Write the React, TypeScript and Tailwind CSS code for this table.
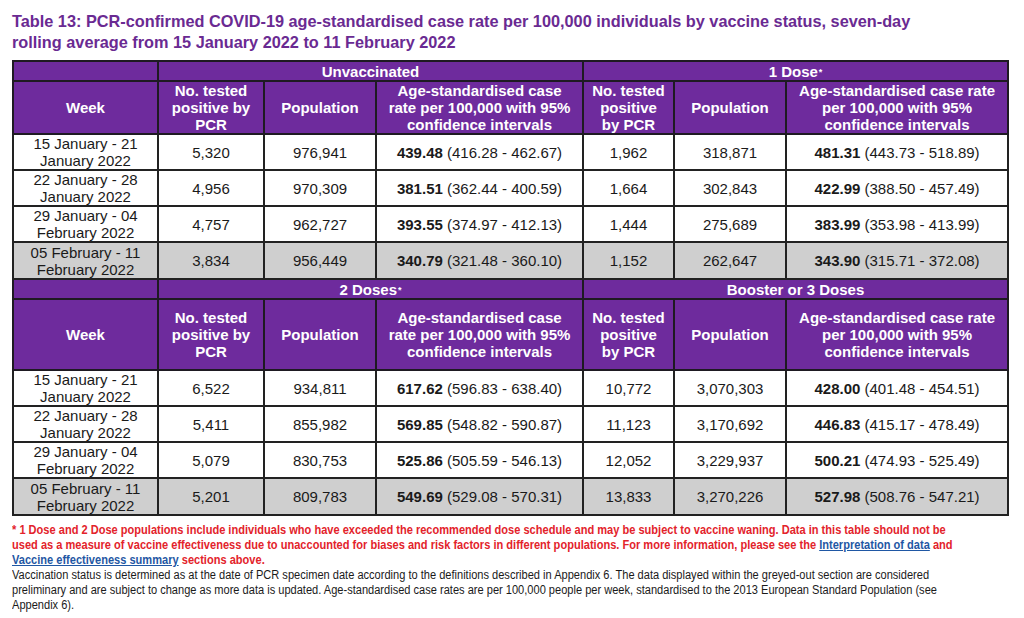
import React from 'react';

type Row = { week: [string, string]; a: string[]; b: string[]; grey?: boolean };

type Block = {
  left: string;
  leftStar: boolean;
  right: string;
  rightStar: boolean;
  subH: string;
  rows: Row[];
};

const blocks: Block[] = [
  {
    left: 'Unvaccinated',
    leftStar: false,
    right: '1 Dose',
    rightStar: true,
    subH: 'h-[52px]',
    rows: [
      { week: ['15 January - 21', 'January 2022'], a: ['5,320', '976,941', '439.48', '(416.28 - 462.67)'], b: ['1,962', '318,871', '481.31', '(443.73 - 518.89)'] },
      { week: ['22 January - 28', 'January 2022'], a: ['4,956', '970,309', '381.51', '(362.44 - 400.59)'], b: ['1,664', '302,843', '422.99', '(388.50 - 457.49)'] },
      { week: ['29 January - 04', 'February 2022'], a: ['4,757', '962,727', '393.55', '(374.97 - 412.13)'], b: ['1,444', '275,689', '383.99', '(353.98 - 413.99)'] },
      { week: ['05 February - 11', 'February 2022'], a: ['3,834', '956,449', '340.79', '(321.48 - 360.10)'], b: ['1,152', '262,647', '343.90', '(315.71 - 372.08)'], grey: true },
    ],
  },
  {
    left: '2 Doses',
    leftStar: true,
    right: 'Booster or 3 Doses',
    rightStar: false,
    subH: 'h-[71px]',
    rows: [
      { week: ['15 January - 21', 'January 2022'], a: ['6,522', '934,811', '617.62', '(596.83 - 638.40)'], b: ['10,772', '3,070,303', '428.00', '(401.48 - 454.51)'] },
      { week: ['22 January - 28', 'January 2022'], a: ['5,411', '855,982', '569.85', '(548.82 - 590.87)'], b: ['11,123', '3,170,692', '446.83', '(415.17 - 478.49)'] },
      { week: ['29 January - 04', 'February 2022'], a: ['5,079', '830,753', '525.86', '(505.59 - 546.13)'], b: ['12,052', '3,229,937', '500.21', '(474.93 - 525.49)'] },
      { week: ['05 February - 11', 'February 2022'], a: ['5,201', '809,783', '549.69', '(529.08 - 570.31)'], b: ['13,833', '3,270,226', '527.98', '(508.76 - 547.21)'], grey: true },
    ],
  },
];

const th = 'border-2 border-[#1e1a22] bg-[#6e2b9d] text-white font-bold text-center align-middle text-[15px] leading-[17px] px-1';
const td = 'border-2 border-[#222] text-center align-middle text-[15px] leading-[17px] text-[#1a1a1a] px-1';

const Star = () => <sup className="text-[9px] relative -top-[2px] ml-[1px]">*</sup>;

const App = () => {
  return (
    <div className="w-[1024px] h-[618px] bg-white overflow-hidden pl-[12px] pt-[11px]" style={{ fontFamily: '"Liberation Sans", Arial, sans-serif' }}>
      <h1 className="text-[16.3px] leading-[21px] font-bold text-[#6a2a92] whitespace-nowrap">
        Table 13: PCR-confirmed COVID-19 age-standardised case rate per 100,000 individuals by vaccine status, seven-day
        <br />
        rolling average from 15 January 2022 to 11 February 2022
      </h1>

      <table className="mt-[7px] w-[995px] table-fixed border-collapse">
        <colgroup>
          <col className="w-[145px]" />
          <col className="w-[106px]" />
          <col className="w-[112px]" />
          <col className="w-[207px]" />
          <col className="w-[91px]" />
          <col className="w-[112px]" />
          <col className="w-[222px]" />
        </colgroup>
        <tbody>
          {blocks.map((blk) => (
            <React.Fragment key={blk.left}>
              <tr className="h-[20px]">
                <th className={th}></th>
                <th className={th} colSpan={3}>
                  {blk.left}
                  {blk.leftStar && <Star />}
                </th>
                <th className={th} colSpan={3}>
                  {blk.right}
                  {blk.rightStar && <Star />}
                </th>
              </tr>
              <tr className={blk.subH}>
                <th className={th}>Week</th>
                <th className={th}>No. tested<br />positive by<br />PCR</th>
                <th className={th}>Population</th>
                <th className={th}>Age-standardised case<br />rate per 100,000 with 95%<br />confidence intervals</th>
                <th className={th}>No. tested<br />positive<br />by PCR</th>
                <th className={th}>Population</th>
                <th className={th}>Age-standardised case rate<br />per 100,000 with 95%<br />confidence intervals</th>
              </tr>
              {blk.rows.map((r, i) => (
                <tr key={i} className={r.grey ? 'h-[37px] bg-[#cfcfcf]' : 'h-[36px] bg-white'}>
                  <td className={td}>
                    {r.week[0]}
                    <br />
                    {r.week[1]}
                  </td>
                  <td className={td}>{r.a[0]}</td>
                  <td className={td}>{r.a[1]}</td>
                  <td className={td}>
                    <span className="font-bold">{r.a[2]}</span> {r.a[3]}
                  </td>
                  <td className={td}>{r.b[0]}</td>
                  <td className={td}>{r.b[1]}</td>
                  <td className={td}>
                    <span className="font-bold">{r.b[2]}</span> {r.b[3]}
                  </td>
                </tr>
              ))}
            </React.Fragment>
          ))}
        </tbody>
      </table>

      {/* footnote set in a condensed face: Arial Narrow is not available, so squeeze horizontally */}
      <div className="mt-[7px] w-[1120px] origin-top-left scale-x-[0.885] whitespace-nowrap text-[12.5px] leading-[15px]">
        <p className="font-bold text-[#e3232b]">
          * 1 Dose and 2 Dose populations include individuals who have exceeded the recommended dose schedule and may be subject to vaccine waning. Data in this table should not be
          <br />
          used as a measure of vaccine effectiveness due to unaccounted for biases and risk factors in different populations. For more information, please see the{' '}
          <span className="text-[#1f57a4] underline">Interpretation of data</span> and
          <br />
          <span className="text-[#1f57a4] underline">Vaccine effectiveness summary</span> sections above.
        </p>
        <p className="text-[#1a1a1a]">
          Vaccination status is determined as at the date of PCR specimen date according to the definitions described in Appendix 6. The data displayed within the greyed-out section are considered
          <br />
          preliminary and are subject to change as more data is updated. Age-standardised case rates are per 100,000 people per week, standardised to the 2013 European Standard Population (see
          <br />
          Appendix 6).
        </p>
      </div>
    </div>
  );
};

export default App;
